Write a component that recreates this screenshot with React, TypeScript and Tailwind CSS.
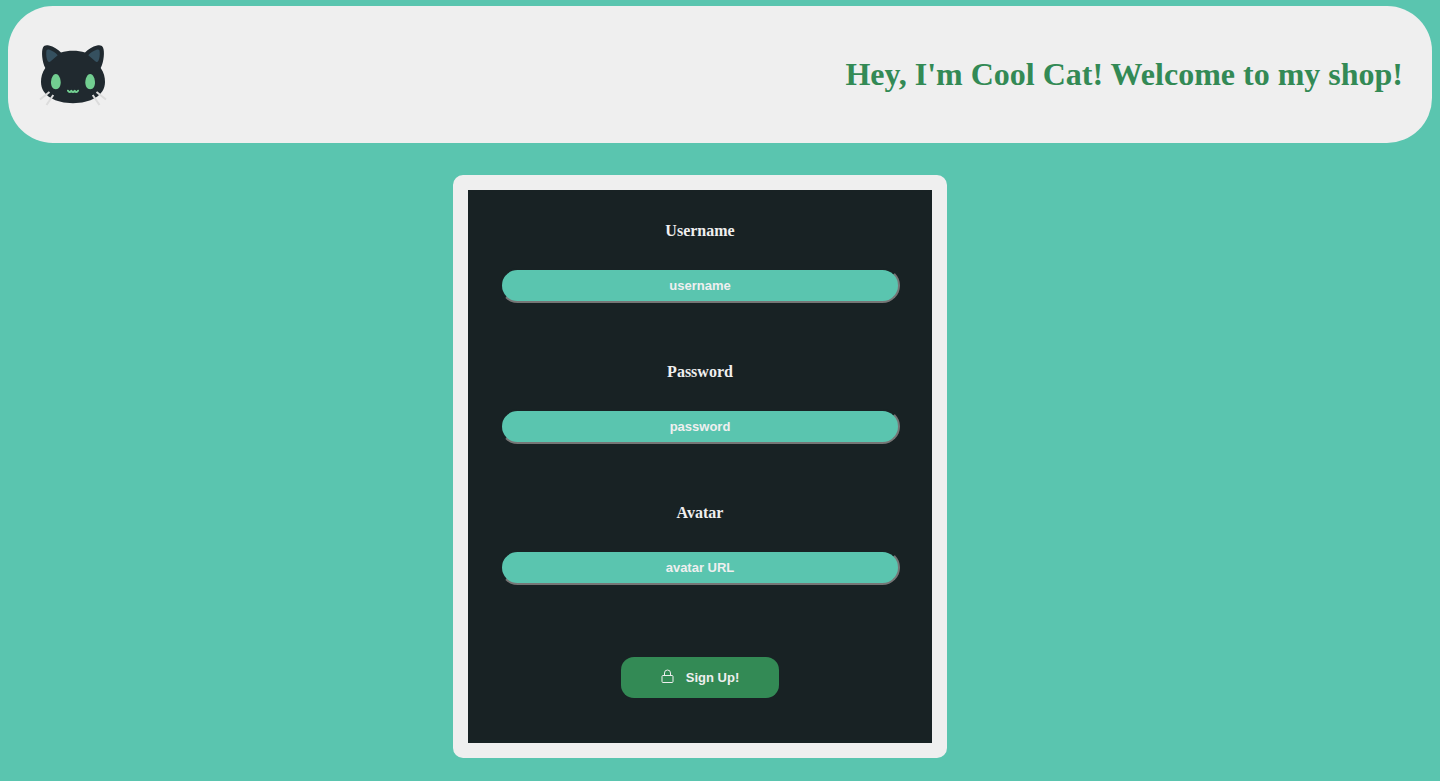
import React from "react";

function CatLogo() {
  return (
    <svg viewBox="0 0 70 70" className="size-[70px]" role="img" aria-label="Cool Cat">
      <path
        d="M7.300 28C4 22 3.200 11 5 7.500C6 5.200 8.500 4.700 11 5.500C15.500 6.500 20 9.500 23 12.500C30 10 40 10 47 12.500C50 9.500 54.500 6.500 59 5.500C61.500 4.700 64 5.200 65 7.500C66.800 11 66 22 62.700 28C66 33 67 37 67 42C67 56 52 63.200 35 63.200S3 56 3 42C3 37 4 33 7.300 28Z"
        fill="#20292f"
      />
      <path d="M8.300 12C8.300 9.500 9.500 9.200 11.500 9.800C14.500 10.700 18 13 19.700 15.200L13 21Q11 23 9.700 21C8.400 18.500 8 15 8.300 12Z" fill="#35505f" />
      <path d="M61.700 12C61.700 9.500 60.500 9.200 58.500 9.800C55.500 10.700 52 13 50.300 15.200L57 21Q59 23 60.300 21C61.600 18.500 62 15 61.700 12Z" fill="#35505f" />
      <path d="M17.800 34C21 34 22.700 39 22.700 42.500S21 49.200 17.800 49.200S13 46 13 42.500S14.800 34 17.800 34Z" fill="#72ce91" />
      <path d="M52.200 34C55.200 34 57 39 57 42.500S55.400 49.200 52.200 49.200S47.300 46 47.300 42.500S49 34 52.200 34Z" fill="#72ce91" />
      <path
        d="M30 50.700Q31.700 53.300 33.300 50.900Q35 53.300 36.700 50.900Q38.300 53.300 40 50.700"
        fill="none"
        stroke="#72ce91"
        strokeWidth="2"
        strokeLinecap="round"
        strokeLinejoin="round"
      />
      <path d="M2 59.500L11.500 52M8.500 65L15.300 55M68 59.500L58.500 52M61.500 65L54.700 55" stroke="#dcdcdc" strokeWidth="2" fill="none" />
    </svg>
  );
}

function LockIcon() {
  return (
    <svg viewBox="0 0 13 15" className="mb-0.5 h-[15px] w-[13px]" fill="none" stroke="currentColor" aria-hidden="true">
      <rect x="1" y="6.500" width="11" height="7" rx="1" />
      <path d="M3.500 6.500V4a3 3 0 0 1 6 0v2.500" />
    </svg>
  );
}

type FieldProps = { id: string; label: string; placeholder: string; type?: string };

function Field({ id, label, placeholder, type = "text" }: FieldProps) {
  return (
    <div className="flex h-[141px] flex-col items-center">
      <label htmlFor={id} className="mb-[27px] text-base leading-5 font-bold">
        {label}
      </label>
      <input
        id={id}
        type={type}
        placeholder={placeholder}
        className="h-[35px] w-full rounded-[20px] border-2 border-t-[#182224] border-r-[#767676] border-b-[#767676] border-l-[#182224] bg-[#5ac5af] text-center font-['Liberation_Sans',Arial,sans-serif] text-[13px] font-bold text-[#efefef] placeholder:text-[#efefef]"
      />
    </div>
  );
}

export default function App() {
  return (
    <div className="min-h-screen bg-[#5ac5af] px-2 pt-1.5 pb-[23px] font-['Liberation_Serif','Times_New_Roman',serif]">
      <header className="flex h-[137px] items-center justify-between rounded-[45px] bg-[#efefef] pr-[29px] pl-[30px]">
        <CatLogo />
        <h1 className="pb-0.5 text-[32px] leading-9 font-bold text-[#338a55]">Hey, I&apos;m Cool Cat! Welcome to my shop!</h1>
      </header>
      <main className="mt-8 flex justify-center pr-10">
        <form
          className="w-full max-w-[494px] rounded-[10px] border-[15px] border-[#efefef] bg-[#182224] px-8 pt-[31px] pb-[45px] text-[#efefef]"
          onSubmit={(e) => e.preventDefault()}
        >
          <Field id="username" label="Username" placeholder="username" />
          <Field id="password" label="Password" placeholder="password" type="password" />
          <Field id="avatar" label="Avatar" placeholder="avatar URL" />
          <div className="mt-[13px] flex justify-center">
            <button
              type="submit"
              className="flex h-[41px] w-[158px] items-center justify-center gap-3 rounded-[13px] bg-[#338a55] font-['Liberation_Sans',Arial,sans-serif] text-[13px] font-bold"
            >
              <LockIcon />
              Sign Up!
            </button>
          </div>
        </form>
      </main>
    </div>
  );
}
